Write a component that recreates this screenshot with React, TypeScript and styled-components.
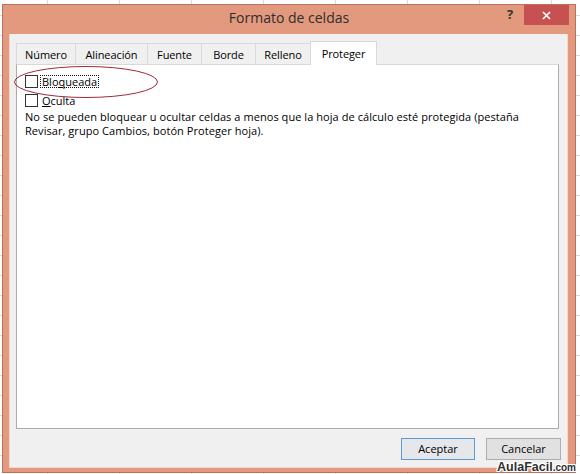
import React from "react";
import styled, { createGlobalStyle } from "styled-components";

const Global = createGlobalStyle`
  html, body { margin: 0; padding: 0; }
  body {
    background: #ffffff;
    font-family: "Open Sans", "Segoe UI", sans-serif;
    font-size: 11px;
    color: #000;
  }
`;

const Desk = styled.div`
  position: relative;
  width: 580px;
  height: 474px;
  overflow: hidden;
  box-sizing: border-box;
  padding: 4px 0 0 2px;
  background-color: #ffffff;
  background-image: linear-gradient(to right, #d9d9d9 1px, transparent 1px),
    linear-gradient(to bottom, #d9d9d9 1px, transparent 1px);
  background-size: 72px 20px;
  background-position: 47px 15px;
`;

const Window = styled.div`
  width: 574px;
  height: 469px;
  box-sizing: border-box;
  border: 1px solid #b9705f;
  background: #e2997d;
  display: flex;
  flex-direction: column;
`;

const TitleBar = styled.div`
  height: 29px;
  flex: none;
  display: grid;
  grid-template-columns: 1fr auto 1fr;
  align-items: start;
`;

const Title = styled.div`
  grid-column: 2;
  font-size: 14px;
  line-height: 26px;
  color: #2e2e2e;
`;

const Controls = styled.div`
  grid-column: 3;
  justify-self: end;
  display: flex;
  align-items: flex-start;
  gap: 2px;
  margin-right: 6px;
`;

const HelpButton = styled.div`
  width: 24px;
  height: 20px;
  line-height: 18px;
  text-align: center;
  font-size: 13px;
  font-weight: 700;
  color: #333;
`;

const CloseButton = styled.div`
  width: 45px;
  height: 20px;
  background: #c75050;
  display: flex;
  align-items: center;
  justify-content: center;
`;

const Client = styled.div`
  flex: 1;
  margin: 0 7px 4px 6px;
  border: 1px solid #f2d6cb;
  border-top: none;
  background: #f0f0f0;
  display: flex;
  flex-direction: column;
  padding: 7px 6px 7px 6px;
`;

const TabStrip = styled.div`
  position: relative;
  z-index: 1;
  height: 23px;
  display: flex;
  align-items: flex-end;
`;

const Tab = styled.div<{ $w: number; $active?: boolean }>`
  box-sizing: border-box;
  width: ${(p) => p.$w}px;
  height: ${(p) => (p.$active ? 24 : 21)}px;
  margin-bottom: ${(p) => (p.$active ? -1 : 0)}px;
  margin-left: -1px;
  &:first-child { margin-left: 0; }
  border: 1px solid #d9d9d9;
  border-bottom: none;
  background: ${(p) => (p.$active ? "#ffffff" : "#f0f0f0")};
  text-align: center;
  padding-top: ${(p) => (p.$active ? 3 : 2)}px;
  line-height: 18px;
  color: #000;
  letter-spacing: -0.1px;
`;

const Panel = styled.div`
  position: relative;
  flex: 1;
  margin-right: 2px;
  border: 1px solid #acacac;
  border-top-color: #d9d9d9;
  background: #ffffff;
  padding: 7px 8px 0 8px;
`;

const CheckRow = styled.div`
  height: 19px;
  display: flex;
  align-items: center;
`;

const Box = styled.span`
  width: 13px;
  height: 13px;
  box-sizing: border-box;
  border: 1px solid #333;
  background: #fff;
  flex: none;
`;

const Label = styled.span<{ $focus?: boolean }>`
  display: inline-block;
  margin-left: 2px;
  padding: 0 1px;
  line-height: 11px;
  border: 1px dotted ${(p) => (p.$focus ? "#111" : "transparent")};
`;

const Hint = styled.p`
  margin: 0;
  line-height: 14px;
  letter-spacing: 0.06px;
  white-space: nowrap;
`;

const Ellipse = styled.svg`
  position: absolute;
  left: -4px;
  top: 0;
  overflow: visible;
`;

const ButtonRow = styled.div`
  margin-top: 9px;
  display: flex;
  justify-content: flex-end;
  gap: 11px;
`;

const Button = styled.div<{ $default?: boolean }>`
  box-sizing: border-box;
  width: ${(p) => (p.$default ? 74 : 75)}px;
  height: 22px;
  line-height: 20px;
  text-align: center;
  background: ${(p) => (p.$default ? "#e5e7ea" : "#e1e1e1")};
  border: 1px solid ${(p) => (p.$default ? "#5a9bd6" : "#adadad")};
  color: #000;
`;

const Watermark = styled.div`
  position: absolute;
  right: 4px;
  bottom: -1px;
  font-family: "Liberation Sans", Arial, sans-serif;
  font-weight: 700;
  font-size: 12.5px;
  line-height: 14px;
  color: #2f2f2f;
  text-shadow: 1px 0 0 #fff, -1px 0 0 #fff, 0 1px 0 #fff, 0 -1px 0 #fff,
    1px 1px 0 #fff, -1px -1px 0 #fff, 1px -1px 0 #fff, -1px 1px 0 #fff;
`;

const Dom = styled.span`
  font-size: 10px;
`;

const tabs: { label: string; w: number }[] = [
  { label: "Número", w: 60 },
  { label: "Alineación", w: 73 },
  { label: "Fuente", w: 55 },
  { label: "Borde", w: 55 },
  { label: "Relleno", w: 56 },
];

export default function App() {
  return (
    <>
      <Global />
      <Desk>
        <Window>
          <TitleBar>
            <Title>Formato de celdas</Title>
            <Controls>
              <HelpButton>?</HelpButton>
              <CloseButton>
                <svg width="9" height="9" viewBox="0 0 9 9">
                  <path d="M1 1 L8 8 M8 1 L1 8" stroke="#fff" strokeWidth="1.7" />
                </svg>
              </CloseButton>
            </Controls>
          </TitleBar>
          <Client>
            <TabStrip>
              {tabs.map((t) => (
                <Tab key={t.label} $w={t.w}>
                  {t.label}
                </Tab>
              ))}
              <Tab $w={67} $active>
                Proteger
              </Tab>
            </TabStrip>
            <Panel>
              <Ellipse width="148" height="34">
                <ellipse
                  cx="73"
                  cy="17"
                  rx="71.5"
                  ry="15.5"
                  fill="none"
                  stroke="#a0293a"
                  strokeWidth="1"
                />
              </Ellipse>
              <CheckRow>
                <Box />
                <Label $focus>
                  Blo<u>q</u>ueada
                </Label>
              </CheckRow>
              <CheckRow>
                <Box />
                <Label>
                  <u>O</u>culta
                </Label>
              </CheckRow>
              <Hint>
                No se pueden bloquear u ocultar celdas a menos que la hoja de cálculo esté protegida (pestaña
                <br />
                Revisar, grupo Cambios, botón Proteger hoja).
              </Hint>
            </Panel>
            <ButtonRow>
              <Button $default>Aceptar</Button>
              <Button>Cancelar</Button>
            </ButtonRow>
          </Client>
        </Window>
        <Watermark>
          AulaFacil<Dom>.com</Dom>
        </Watermark>
      </Desk>
    </>
  );
}
